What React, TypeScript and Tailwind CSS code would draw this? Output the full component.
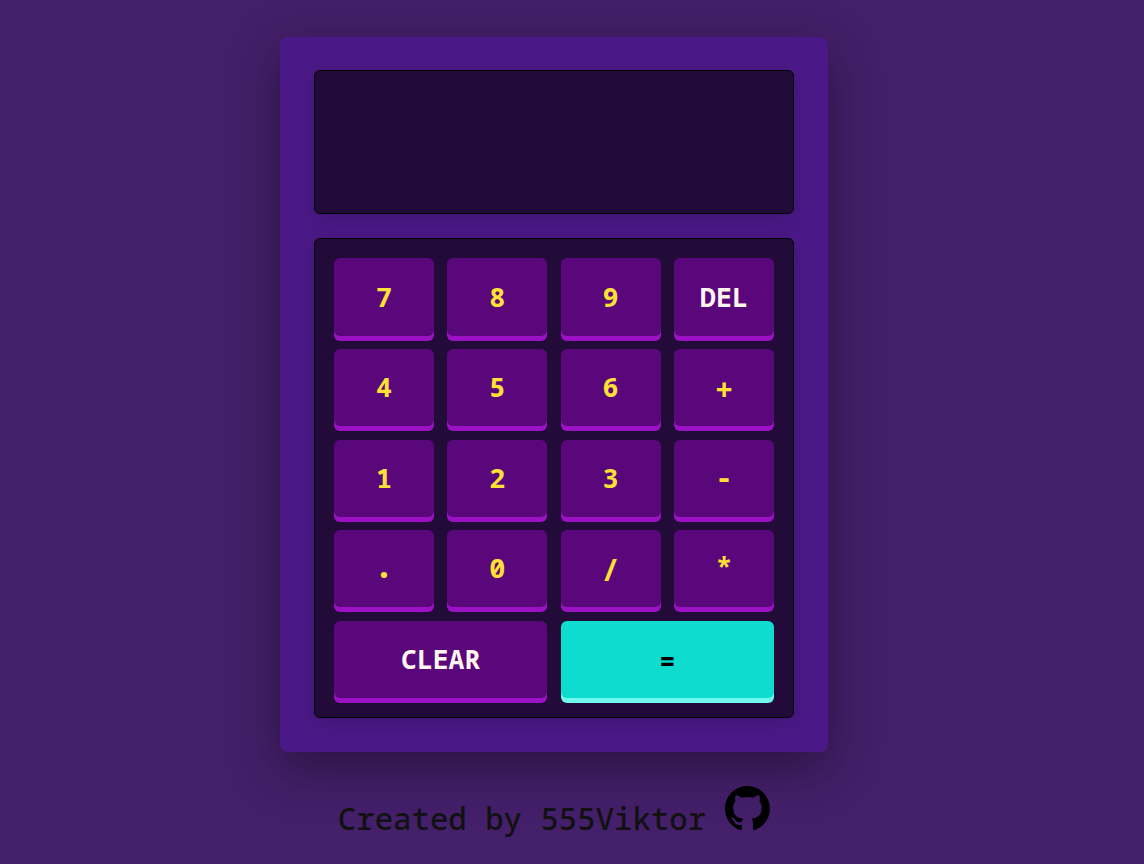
const keys = ['7', '8', '9', 'DEL', '4', '5', '6', '+', '1', '2', '3', '-', '.', '0', '/', '*', 'CLEAR', '='];

function keyStyle(k: string) {
  if (k === '=') return 'col-span-2 pt-1 text-[26.4px] bg-[#0ddccf] text-black shadow-[0_5px_0_#6ef8ee]';
  if (k === 'CLEAR') return 'col-span-2 text-[26.4px] bg-[#59077b] text-[#fff5ee] shadow-[0_5px_0_#9a12c4]';
  if (k === 'DEL') return 'pt-px text-[26.6px] bg-[#59077b] text-[#fff5ee] shadow-[0_5px_0_#9a12c4]';
  const base = 'bg-[#59077b] text-[#ffe135] shadow-[0_5px_0_#9a12c4] ';
  if (k === '+') return base + 'pt-1 text-[31px]';
  if (k === '/') return base + 'pt-px text-[31px]';
  if (k === '.') return base + 'pb-2 text-[34px]';
  if (k === '-') return base + 'pb-0.5 text-[30px]';
  if (k === '*') return base + 'pb-0.5 text-[26.8px]';
  return base + 'text-[26.8px]';
}

function GithubMark() {
  return (
    <svg viewBox="0 0 98 96" className="mt-[0.5px] h-[44.2px] w-[45px] text-black" fill="currentColor">
      <path fillRule="evenodd" clipRule="evenodd" d="M48.854 0C21.839 0 0 22 0 49.217c0 21.756 13.993 40.172 33.405 46.69 2.427.49 3.316-1.059 3.316-2.362 0-1.141-.08-5.052-.08-9.127-13.59 2.934-16.42-5.867-16.42-5.867-2.184-5.704-5.42-7.17-5.42-7.17-4.448-3.015.324-3.015.324-3.015 4.934.326 7.523 5.052 7.523 5.052 4.367 7.496 11.404 5.378 14.235 4.074.404-3.178 1.699-5.378 3.074-6.6-10.839-1.141-22.243-5.378-22.243-24.283 0-5.378 1.94-9.778 5.014-13.2-.485-1.222-2.184-6.275.486-13.038 0 0 4.125-1.304 13.426 5.052a46.97 46.97 0 0 1 12.214-1.63c4.125 0 8.33.571 12.213 1.63 9.302-6.356 13.427-5.052 13.427-5.052 2.67 6.763.97 11.816.485 13.038 3.155 3.422 5.015 7.822 5.015 13.2 0 18.905-11.404 23.06-22.324 24.283 1.78 1.548 3.316 4.481 3.316 9.126 0 6.6-.08 11.897-.08 13.526 0 1.304.89 2.853 3.316 2.364 19.412-6.52 33.405-24.935 33.405-46.691C97.707 22 75.788 0 48.854 0z" />
    </svg>
  );
}

export default function App() {
  return (
    <main className="flex h-[864px] w-full flex-col overflow-hidden bg-[#441f6a] pl-[280px] pt-[37px] font-['Noto_Sans_Mono','DejaVu_Sans_Mono',monospace]">
      <section className="h-[715px] w-[548px] shrink-0 rounded-lg bg-[#4b1987] px-[34px] pt-[33px] shadow-[0_15px_50px_rgba(0,0,0,0.4)]">
        <div className="h-36 rounded-md border border-black bg-[#230b39] shadow-[0_5px_20px_rgba(0,0,0,0.15)]" />
        <div className="mt-6 grid h-[480px] auto-rows-[77.1px] grid-cols-4 content-start gap-x-[13.33px] gap-y-[13.46px] rounded-md border border-black bg-[#230b39] px-[19px] pt-[19.42px] shadow-[0_5px_20px_rgba(0,0,0,0.15)]">
          {keys.map((k) => (
            <button key={k} className={'flex items-center justify-center rounded-md font-bold leading-none ' + keyStyle(k)}>{k}</button>
          ))}
        </div>
      </section>
      <footer className="flex w-[548px] items-start justify-center gap-[19px] pt-[33px] text-[#111]">
        <span className="pt-[13px] text-[30.7px] font-medium leading-10">Created by 555Viktor</span>
        <GithubMark />
      </footer>
    </main>
  );
}
